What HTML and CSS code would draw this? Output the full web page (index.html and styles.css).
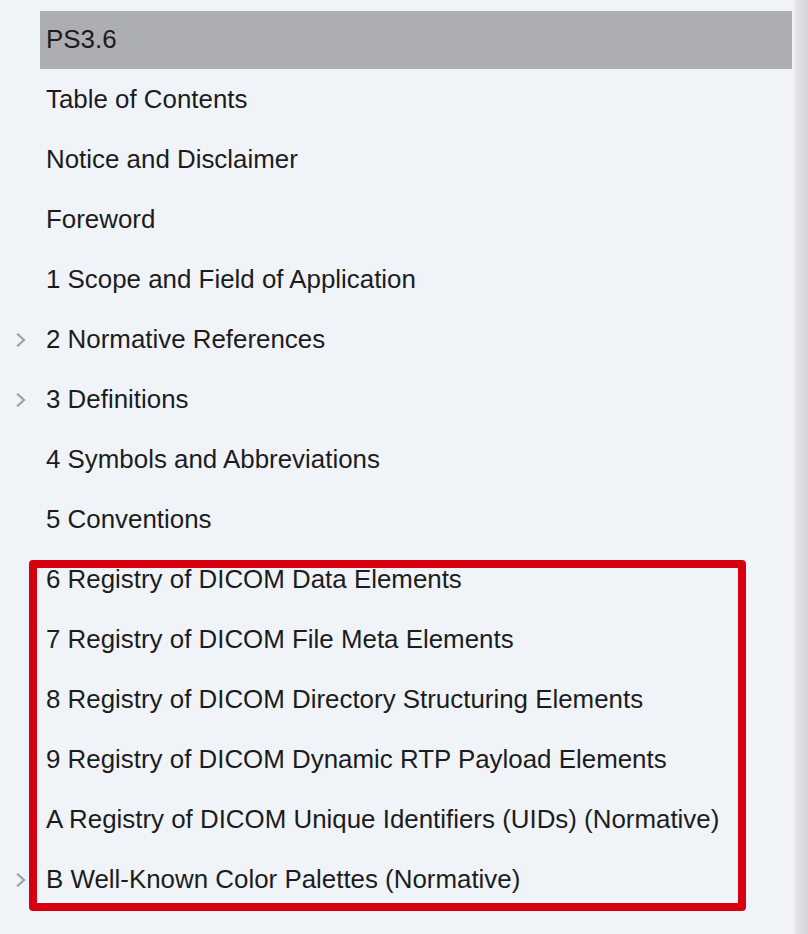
FILE: index.html
```html
<!DOCTYPE html>
<html lang="en">
<head>
<meta charset="utf-8">
<title>PS3.6</title>
<link rel="stylesheet" href="styles.css">
</head>
<body>
<div class="page">
  <nav class="toc">
    <ul class="toc-list">
      <li class="toc-row"><span class="toggle"></span><span class="label is-current">PS3.6</span></li>
      <li class="toc-row"><span class="toggle"></span><span class="label">Table of Contents</span></li>
      <li class="toc-row"><span class="toggle"></span><span class="label">Notice and Disclaimer</span></li>
      <li class="toc-row"><span class="toggle"></span><span class="label">Foreword</span></li>
      <li class="toc-row"><span class="toggle"></span><span class="label">1 Scope and Field of Application</span></li>
      <li class="toc-row"><span class="toggle"><svg class="chev" viewBox="0 0 10 14" width="10" height="14"><path d="M2 1.5 L8 7 L2 12.5" /></svg></span><span class="label">2 Normative References</span></li>
      <li class="toc-row"><span class="toggle"><svg class="chev" viewBox="0 0 10 14" width="10" height="14"><path d="M2 1.5 L8 7 L2 12.5" /></svg></span><span class="label">3 Definitions</span></li>
      <li class="toc-row"><span class="toggle"></span><span class="label">4 Symbols and Abbreviations</span></li>
      <li class="toc-row"><span class="toggle"></span><span class="label">5 Conventions</span></li>
      <li class="toc-row"><span class="toggle"></span><span class="label">6 Registry of DICOM Data Elements</span></li>
      <li class="toc-row"><span class="toggle"></span><span class="label">7 Registry of DICOM File Meta Elements</span></li>
      <li class="toc-row"><span class="toggle"></span><span class="label">8 Registry of DICOM Directory Structuring Elements</span></li>
      <li class="toc-row"><span class="toggle"></span><span class="label">9 Registry of DICOM Dynamic RTP Payload Elements</span></li>
      <li class="toc-row"><span class="toggle"></span><span class="label">A Registry of DICOM Unique Identifiers (UIDs) (Normative)</span></li>
      <li class="toc-row"><span class="toggle"><svg class="chev" viewBox="0 0 10 14" width="10" height="14"><path d="M2 1.5 L8 7 L2 12.5" /></svg></span><span class="label">B Well-Known Color Palettes (Normative)</span></li>
    </ul>
    <div class="highlight-box"></div>
  </nav>
  <div class="scrollbar"></div>
</div>
</body>
</html>
```

FILE: styles.css
```css
html, body {
  margin: 0;
  padding: 0;
  background: #f0f4f8;
}

body {
  font-family: "Liberation Sans", Arial, Helvetica, sans-serif;
  color: #1c1c1e;
}

.page {
  display: flex;
  width: 808px;
  height: 934px;
  overflow: hidden;
}

.toc {
  position: relative;
  flex: 0 0 794px;
  padding-top: 10px;
}

.toc-list {
  list-style: none;
  margin: 0;
  padding: 0;
}

.toc-row {
  display: grid;
  grid-template-columns: 40px 1fr;
  height: 60px;
  align-items: center;
}

.toggle {
  display: flex;
  align-items: center;
  padding-left: 16px;
  height: 100%;
}

.chev {
  display: block;
}

.chev path {
  fill: none;
  stroke: #a0a2a5;
  stroke-width: 2.3;
  stroke-linecap: square;
  stroke-linejoin: miter;
}

.label {
  display: block;
  height: 58px;
  line-height: 56px;
  margin-right: 2px;
  padding-left: 6px;
  font-size: 25.9px;
  white-space: nowrap;
}

.label.is-current {
  background: #adaeb2;
}

.highlight-box {
  position: absolute;
  left: 29px;
  top: 560px;
  width: 701px;
  height: 335px;
  border: 8px solid #d6000f;
  border-radius: 4px;
}

.scrollbar {
  flex: 0 0 14px;
  background: linear-gradient(to right, #e9eaeb 0%, #e2e4e6 20%, #d3d6d9 100%);
}
```
